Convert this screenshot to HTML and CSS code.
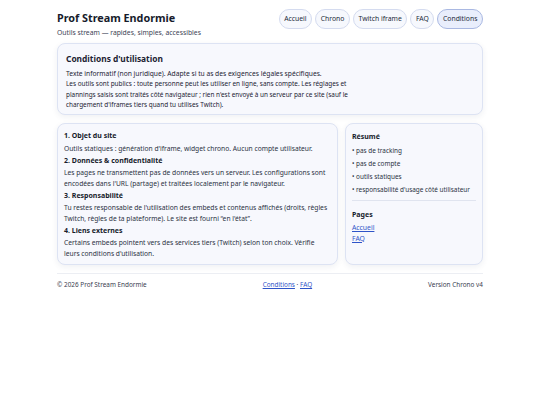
FILE: index.html
```html
<!DOCTYPE html>
<html lang="fr">
<head>
  <meta charset="UTF-8">
  <meta name="viewport" content="width=device-width, initial-scale=1.0">
  <title>Conditions d'utilisation</title>
  <link rel="stylesheet" href="styles.css">
</head>
<body>
<div class="container">
  <header class="site-header">
    <div class="brand">
      <h1>Prof Stream Endormie</h1>
      <p class="tagline">Outils stream — rapides, simples, accessibles</p>
    </div>
    <nav class="nav">
      <a href="#">Accueil</a>
      <a href="#">Chrono</a>
      <a href="#">Twitch iframe</a>
      <a href="#">FAQ</a>
      <a href="#" class="active">Conditions</a>
    </nav>
  </header>

  <section class="card intro">
    <h2>Conditions d'utilisation</h2>
    <p class="lead">Texte informatif (non juridique). Adapte si tu as des exigences légales spécifiques.</p>
    <p class="small">Les outils sont publics : toute personne peut les utiliser en ligne, sans compte. Les réglages et plannings saisis sont traités côté navigateur ; rien n'est envoyé à un serveur par ce site (sauf le chargement d'iframes tiers quand tu utilises Twitch).</p>
  </section>

  <div class="grid">
    <section class="card terms">
      <h3>1. Objet du site</h3>
      <p>Outils statiques : génération d'iframe, widget chrono. Aucun compte utilisateur.</p>
      <h3>2. Données &amp; confidentialité</h3>
      <p>Les pages ne transmettent pas de données vers un serveur. Les configurations sont encodées dans l'URL (partage) et traitées localement par le navigateur.</p>
      <h3>3. Responsabilité</h3>
      <p>Tu restes responsable de l'utilisation des embeds et contenus affichés (droits, règles Twitch, règles de ta plateforme). Le site est fourni “en l'état”.</p>
      <h3>4. Liens externes</h3>
      <p>Certains embeds pointent vers des services tiers (Twitch) selon ton choix. Vérifie leurs conditions d'utilisation.</p>
    </section>

    <aside class="card side">
      <h3>Résumé</h3>
      <ul class="summary">
        <li>• pas de tracking</li>
        <li>• pas de compte</li>
        <li>• outils statiques</li>
        <li>• responsabilité d'usage côté utilisateur</li>
      </ul>
      <hr>
      <h3>Pages</h3>
      <div class="page-links">
        <a href="#">Accueil</a>
        <a href="#">FAQ</a>
      </div>
    </aside>
  </div>

  <footer class="site-footer">
    <span>© 2026 Prof Stream Endormie</span>
    <span><a href="#">Conditions</a> · <a href="#">FAQ</a></span>
    <span>Version Chrono v4</span>
  </footer>
</div>
</body>
</html>
```

FILE: styles.css
```css
body {
  margin: 0;
  padding: 0;
  font-family: "Noto Sans", "Open Sans", sans-serif;
  color: #1c2233;
  background: #fff;
}
.container {
  width: 426px;
  margin: 0 auto;
}
.site-header {
  display: flex;
  justify-content: space-between;
  align-items: flex-start;
  padding-top: 9px;
  height: 34px;
}
h1 {
  margin: 1px 0 0;
  font-size: 10.8px;
  line-height: 16px;
  font-weight: 700;
  color: #161b2b;
}
.tagline {
  margin: 2px 0 0;
  font-size: 6.8px;
  color: #3b4254;
}
.nav {
  display: flex;
  gap: 3px;
}
.nav a {
  display: inline-block;
  height: 18px;
  line-height: 18px;
  padding: 0 4.6px;
  border: 1px solid #d4dbef;
  border-radius: 10px;
  background: #f6f8fd;
  color: #222a3a;
  font-size: 6.8px;
  text-decoration: none;
}
.nav a.active {
  background: #e9eefc;
  border-color: #a9b8e2;
}
.card {
  background: #f7f8fd;
  border: 1px solid #dde3f3;
  border-radius: 8px;
  box-shadow: 0 2px 6px rgba(30, 40, 80, 0.07);
  box-sizing: border-box;
}
.intro {
  height: 72px;
  padding: 8px 8px;
}
.intro h2 {
  margin: 0 0 3px;
  font-size: 8.4px;
  line-height: 14px;
}
.intro p {
  margin: 0;
  max-width: 290px;
  font-size: 6.4px;
  line-height: 10.3px;
  color: #1c2233;
}
.intro .lead {
  font-size: 6.7px;
}
.grid {
  display: grid;
  grid-template-columns: 281px 1fr;
  gap: 7px;
  margin-top: 8px;
}
.terms, .side {
  height: 142px;
  padding: 6px 6px;
}
.side {
  padding-top: 7px;
}
.terms h3, .side h3 {
  margin: 0 0 2px;
  font-size: 7px;
  line-height: 11px;
  font-weight: 700;
  color: #161b2b;
}
.terms h3 {
  margin-bottom: 2.5px;
}
.terms p {
  margin: 0 0 0.5px;
  font-size: 6.7px;
  line-height: 10.5px;
  color: #2a3142;
}
.summary {
  list-style: none;
  margin: 1px 0 0;
  padding: 0;
}
.summary li {
  font-size: 6.4px;
  line-height: 13px;
  color: #2a3142;
}
.side hr {
  border: none;
  border-top: 1px solid #e0e4ef;
  margin: 4px 0 8px;
}
.page-links {
  padding-top: 1px;
}
.page-links a {
  display: block;
  font-size: 6.8px;
  line-height: 10.5px;
  color: #2f54c8;
}
.site-footer {
  display: flex;
  justify-content: space-between;
  margin-top: 8px;
  padding-top: 5px;
  border-top: 1px solid #eceef3;
  font-size: 6.4px;
  line-height: 12px;
  color: #3a4050;
}
.site-footer a {
  color: #2f54c8;
}
```
